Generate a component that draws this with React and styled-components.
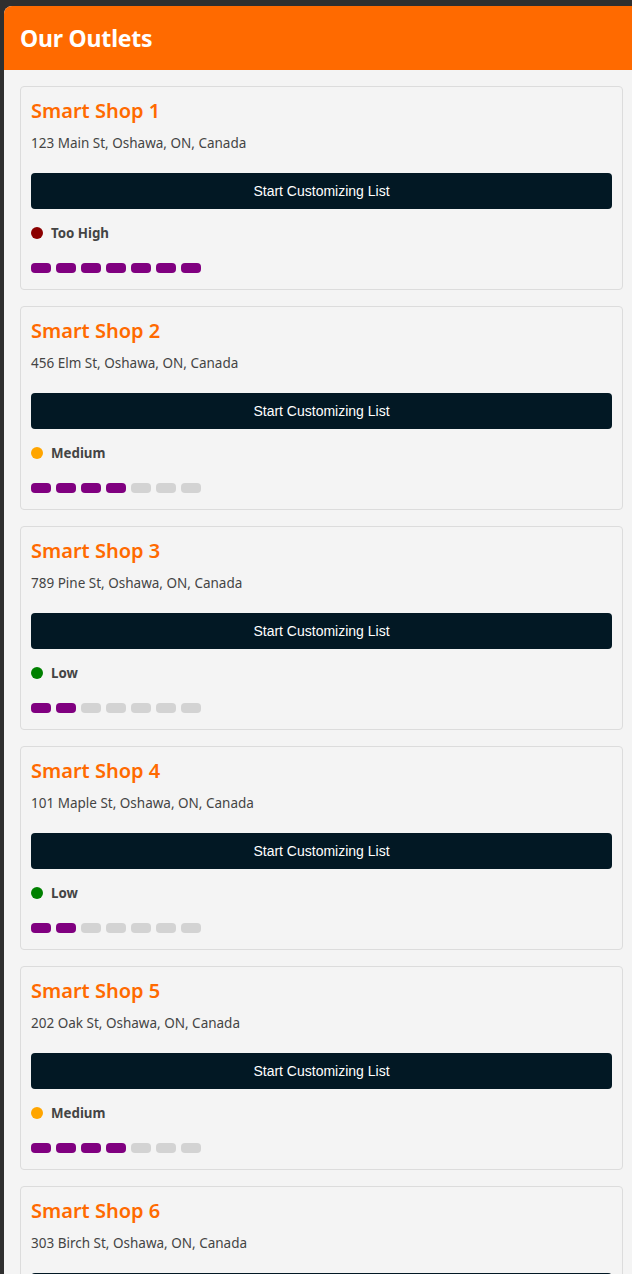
import React from "react";
import styled, { createGlobalStyle } from "styled-components";

const Global = createGlobalStyle`
  html, body { margin: 0; padding: 0; background: #2f2f2f; }
  body { font-family: "Noto Sans", "Open Sans", sans-serif; }
  * { box-sizing: border-box; }
`;

const Panel = styled.div`
  margin: 6px 0 0 4px;
  background: #f4f4f4;
  border-top-left-radius: 8px;
  overflow: hidden;
  min-height: 1268px;
`;

const Header = styled.header`
  background: #ff6a00;
  height: 64px;
  display: flex;
  align-items: center;
  padding: 0 16px;
`;

const Title = styled.h1`
  margin: 0;
  color: #fff;
  font-size: 23px;
  font-weight: 700;
  letter-spacing: -0.2px;
`;

const List = styled.div`
  display: flex;
  flex-direction: column;
  gap: 16px;
  padding: 16px 9px 16px 16px;
`;

const Card = styled.div`
  border: 1px solid #dcdcdc;
  border-radius: 4px;
  padding: 10px 10px 16px;
  height: 204px;
  flex-shrink: 0;
  display: flex;
  flex-direction: column;
`;

const ShopName = styled.h2`
  margin: 0;
  color: #ff6a00;
  font-size: 20px;
  font-weight: 600;
  line-height: 28px;
`;

const Address = styled.p`
  margin: 9px 0 0;
  color: #444;
  font-size: 13.5px;
  line-height: 18px;
`;

const Button = styled.button`
  margin-top: 21px;
  height: 36px;
  width: 100%;
  flex-shrink: 0;
  border: none;
  border-radius: 4px;
  background: #021824;
  color: #fff;
  font-family: "Liberation Sans", Arial, sans-serif;
  font-size: 14px;
  cursor: pointer;
`;

const Status = styled.div`
  margin-top: 16px;
  display: flex;
  align-items: center;
  gap: 8px;
  height: 16px;
`;

const Dot = styled.span`
  width: 12px;
  height: 12px;
  border-radius: 50%;
  background: ${(p) => p.$color};
`;

const StatusText = styled.span`
  color: #444;
  font-size: 13.3px;
  font-weight: 700;
`;

const Bars = styled.div`
  margin-top: 22px;
  display: flex;
  gap: 5px;
`;

const Bar = styled.span`
  width: 20px;
  height: 10px;
  border-radius: 4px;
  background: ${(p) => (p.$on ? "#800080" : "#d3d3d3")};
`;

const levels = {
  "Too High": { color: "#8b0000", n: 7 },
  Medium: { color: "#ffa500", n: 4 },
  Low: { color: "#008000", n: 2 },
};

const shops = [
  { name: "Smart Shop 1", addr: "123 Main St, Oshawa, ON, Canada", level: "Too High" },
  { name: "Smart Shop 2", addr: "456 Elm St, Oshawa, ON, Canada", level: "Medium" },
  { name: "Smart Shop 3", addr: "789 Pine St, Oshawa, ON, Canada", level: "Low" },
  { name: "Smart Shop 4", addr: "101 Maple St, Oshawa, ON, Canada", level: "Low" },
  { name: "Smart Shop 5", addr: "202 Oak St, Oshawa, ON, Canada", level: "Medium" },
  { name: "Smart Shop 6", addr: "303 Birch St, Oshawa, ON, Canada", level: "Low" },
];

export default function App() {
  return (
    <>
      <Global />
      <Panel>
        <Header>
          <Title>Our Outlets</Title>
        </Header>
        <List>
          {shops.map((s) => {
            const l = levels[s.level];
            return (
              <Card key={s.name}>
                <ShopName>{s.name}</ShopName>
                <Address>{s.addr}</Address>
                <Button>Start Customizing List</Button>
                <Status>
                  <Dot $color={l.color} />
                  <StatusText>{s.level}</StatusText>
                </Status>
                <Bars>
                  {Array.from({ length: 7 }).map((_, i) => (
                    <Bar key={i} $on={i < l.n} />
                  ))}
                </Bars>
              </Card>
            );
          })}
        </List>
      </Panel>
    </>
  );
}
